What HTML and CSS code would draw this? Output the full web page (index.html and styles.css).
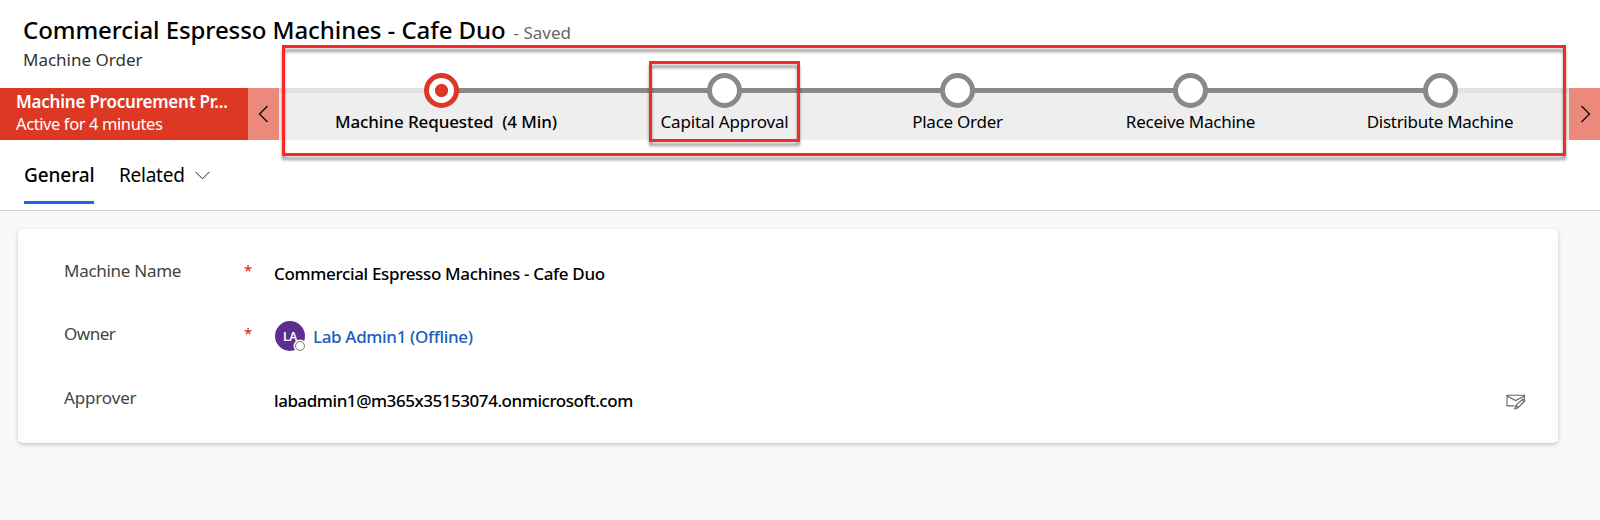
FILE: index.html
```html
<!DOCTYPE html>
<html lang="en">
<head>
<meta charset="utf-8">
<title>Commercial Espresso Machines - Cafe Duo</title>
<link rel="stylesheet" href="styles.css">
</head>
<body>
<header class="header">
  <div class="title-row"><h1 class="title">Commercial Espresso Machines - Cafe Duo</h1><span class="saved">- Saved</span></div>
  <div class="entity">Machine Order</div>
</header>
<section class="process">
  <div class="process-info">
    <div class="process-name">Machine Procurement Pr...</div>
    <div class="process-time">Active for 4 minutes</div>
  </div>
  <button class="arrow"><svg width="11" height="18" viewBox="0 0 11 18"><path d="M9.5 1 1.5 9l8 8"/></svg></button>
  <ol class="steps">
    <li class="step first"><span class="dot active"></span><span class="label current">Machine Requested&nbsp; (4 Min)</span></li>
    <li class="step"><span class="dot"></span><span class="label">Capital Approval</span><span class="callout callout-step"></span></li>
    <li class="step"><span class="dot"></span><span class="label place">Place Order</span></li>
    <li class="step"><span class="dot"></span><span class="label receive">Receive Machine</span></li>
    <li class="step last"><span class="dot"></span><span class="label distribute">Distribute Machine</span></li>
  </ol>
  <button class="arrow next"><svg width="11" height="18" viewBox="0 0 11 18"><path d="m1.5 1 8 8-8 8"/></svg></button>
  <span class="callout callout-process"></span>
</section>
<nav class="tabs">
  <a class="tab selected">General</a>
  <a class="tab related">Related<svg width="15" height="9" viewBox="0 0 15 9"><path d="m.5 .8 7 7 7-7"/></svg></a>
</nav>
<main class="content">
  <div class="card">
    <div class="row">
      <div class="name">Machine Name</div><div class="required">*</div>
      <div class="value">Commercial Espresso Machines - Cafe Duo</div>
    </div>
    <div class="row">
      <div class="name owner">Owner</div><div class="required">*</div>
      <div class="value person"><span class="avatar">LA<i class="presence"></i></span><a class="link">Lab Admin1 (Offline)</a></div>
    </div>
    <div class="row">
      <div class="name approver">Approver</div><div class="required"></div>
      <div class="value email">labadmin1@m365x35153074.onmicrosoft.com</div>
      <svg class="mail" width="20" height="16" viewBox="0 0 20 16"><path d="M8.3 11.9H1V1.2h17.5v3.2M1 2l8.7 4.6L18.3 2M8.9 14.8l1-3.4 6.8-6.1q1.3-.6 2 .5.4.9-.4 1.7l-6.3 6.2zM10 11.5l2 2.1M16.2 5.9l1.9 1.9"/></svg>
    </div>
  </div>
</main>
</body>
</html>
```
FILE: styles.css
```css
* { box-sizing: border-box; }
body { margin: 0; height: 520px; display: flex; flex-direction: column; background: #fff; color: #000; font: 17px/24px "Noto Sans", "Open Sans", sans-serif; overflow: hidden; }
.header { height: 88px; padding: 12px 0 0 23px; }
.title-row { display: flex; align-items: baseline; height: 36px; gap: 8px; }
.title { margin: 0; font-size: 24px; line-height: 35px; font-weight: 500; letter-spacing: -0.08px; }
.saved { color: #666; }
.entity { color: #333; }

.process { position: relative; display: flex; height: 52px; }
.process-info { width: 248px; padding: 3px 0 0 16px; background: #dc3824; color: #fff; line-height: 22px; white-space: nowrap; }
.process-name { font-weight: 600; letter-spacing: -0.22px; }
.process-time { font-size: 16.5px; letter-spacing: -0.4px; }
.arrow { width: 31px; padding: 0; border: 0; background: #eb897d; display: flex; align-items: center; justify-content: center; }
.arrow.next { padding-left: 2px; }
.arrow svg { fill: none; stroke: #111; stroke-width: 1.4; }
.steps { flex: 1; display: grid; grid-template-columns: 325px 241px 225px 241px 1fr; margin: 0; padding: 0; list-style: none; background: #eee; }
.step { position: relative; display: flex; flex-direction: column; align-items: center; height: 52px; background: linear-gradient(#898987, #898987) 0 0 / 100% 5px no-repeat; }
.step.first { background: linear-gradient(90deg, #e1e1e1 50%, #898987 50%) 0 0 / 100% 5px no-repeat; }
.step.last { background: linear-gradient(90deg, #898987 50%, #e1e1e1 50%) 0 0 / 100% 5px no-repeat; }
.dot { width: 35px; height: 35px; margin-top: -15px; flex: none; border: 5px solid #898987; border-radius: 50%; background: #fff; }
.dot.active { border-color: #dc3824; background: radial-gradient(circle, #dc3824 6.2px, #fff 6.9px); }
.label { margin-top: 2px; letter-spacing: -0.15px; white-space: nowrap; }
.label.current { margin-left: 9px; font-weight: 500; letter-spacing: -0.1px; }
.label.place { letter-spacing: -0.25px; }
.label.receive { letter-spacing: -0.25px; }
.label.distribute { letter-spacing: -0.28px; }
.callout { position: absolute; border: 3px solid #f32828; filter: drop-shadow(0 4px 1.5px rgba(0, 0, 0, .38)); pointer-events: none; }
.callout-process { left: 282px; top: -43px; width: 1284px; height: 111px; }
.callout-step { left: 45px; top: -27px; width: 151px; height: 81px; }

.tabs { height: 71px; padding: 20px 0 0 24px; display: flex; gap: 25px; border-bottom: 1px solid #d6d6d6; }
.tab { height: 44px; font-size: 19px; line-height: 30px; letter-spacing: -0.25px; }
.tab.selected { width: 70px; border-bottom: 3px solid #2266e3; font-weight: 500; letter-spacing: -0.1px; }
.related { display: flex; gap: 10px; }
.related svg { margin-top: 11px; fill: none; stroke: #222; }

.content { flex: 1; padding: 18px 42px 0 18px; background: #faf9f8; }
.card { height: 214px; padding: 30px 32px 0 46px; border-radius: 5px; background: #fff; box-shadow: 0 2px 4px rgba(0, 0, 0, .18), 0 0 2px rgba(0, 0, 0, .08); }
.row { display: flex; height: 64px; }
.row:first-child { height: 63px; }
.name { width: 180px; color: #444; letter-spacing: -0.28px; }
.name.owner { letter-spacing: -0.5px; }
.name.approver { letter-spacing: -0.15px; }
.required { width: 30px; color: #e3121d; font-size: 15px; line-height: 22px; }
.value { flex: 1; padding-top: 3px; font-weight: 500; letter-spacing: -0.34px; white-space: nowrap; }
.value.email { letter-spacing: -0.45px; }
.person { display: flex; gap: 8px; letter-spacing: -0.35px; }
.avatar { position: relative; left: 1px; width: 30px; height: 30px; margin-top: -4px; border-radius: 50%; background: #5c2e91; color: #fff; font-size: 12px; line-height: 31px; font-weight: 600; text-align: center; }
.presence { position: absolute; left: 20px; top: 20px; width: 10px; height: 10px; border: 1px solid #777; border-radius: 50%; background: #fff; box-shadow: 0 0 0 1.5px #fff; }
.link { margin-left: 1px; color: #1a5dbb; }
.mail { margin-top: 8px; fill: none; stroke: #666; stroke-width: 1.1; }
```
